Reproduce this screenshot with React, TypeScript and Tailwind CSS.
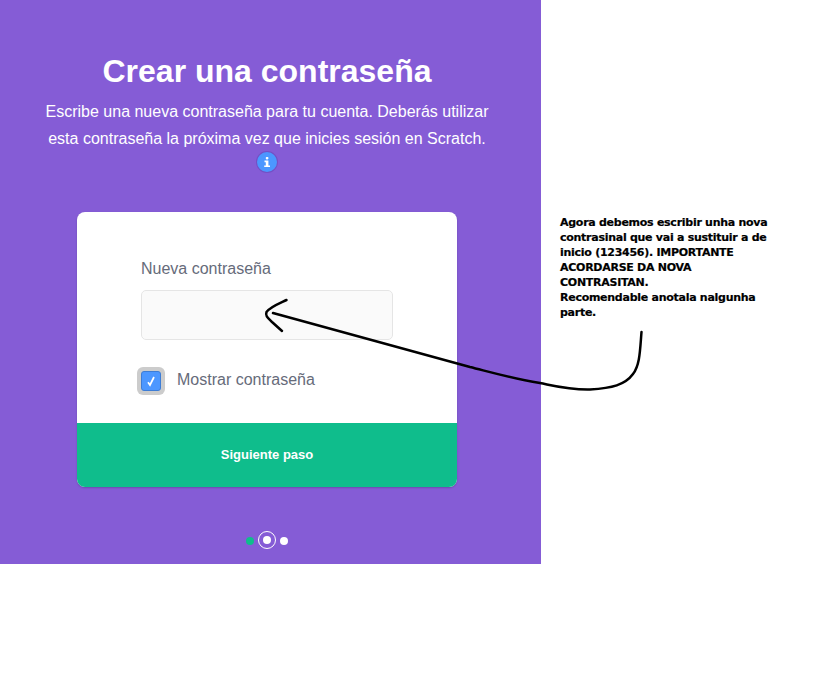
export default function App() {
  return (
    <div className="relative w-[814px] h-[685px] bg-white overflow-hidden font-['Liberation_Sans',Arial,sans-serif]">
      <div className="w-[541px] h-[564px] bg-[#855cd6] pr-[7px] flex flex-col items-center text-white">
        <h1 className="mt-[51px] text-[32px] leading-[40px] font-bold">Crear una contraseña</h1>
        <p className="mt-[7px] w-[460px] text-center text-[16px] leading-[27.2px]">
          Escribe una nueva contraseña para tu cuenta. Deberás utilizar esta contraseña la próxima vez que inicies sesión en Scratch.
        </p>
        <div className="w-[20px] h-[20px] rounded-full bg-[#4c97ff] ring-1 ring-[#7350c4] flex items-center justify-center">
          <svg width="8" height="10" viewBox="0 0 8 10" fill="white">
            <rect x="2.8" y="0" width="2.6" height="2.4" rx="0.8" />
            <path d="M1.5 3.6h3.9v4.8H7V10H1.2V8.4h1.6V5.2H1.5z" />
          </svg>
        </div>
        <div className="mt-[40px] w-[380px] h-[275px] bg-white rounded-lg shadow-[0_1px_2px_rgba(0,0,0,0.2)] flex flex-col overflow-hidden">
          <div className="flex-1 pl-[64px] pt-[47px]">
            <label className="block text-[16px] leading-[20px] text-[#666b7a]">Nueva contraseña</label>
            <input
              type="password"
              className="block mt-[11px] w-[252px] h-[50px] rounded-[5px] border border-[#e5e5e5] bg-[#fafafa] outline-none"
            />
            <div className="mt-[27px] flex items-center -ml-[4px]">
              <div className="w-[28px] h-[28px] rounded-[6px] bg-[#cccccc] flex items-center justify-center">
                <div className="w-[20px] h-[20px] rounded-[3px] bg-[#4c97ff] border border-[#3d7dd6] flex items-center justify-center">
                  <svg width="12" height="12" viewBox="0 0 12 12" fill="none" stroke="white" strokeWidth="1.7">
                    <path d="M3 7.2 L5 10 L9 2" />
                  </svg>
                </div>
              </div>
              <span className="ml-[12px] -mt-[2px] text-[16px] leading-[20px] text-[#666b7a]">Mostrar contraseña</span>
            </div>
          </div>
          <div className="h-[64px] pb-[2px] bg-[#0fbd8c] flex items-center justify-center text-[13px] font-bold text-white">
            Siguiente paso
          </div>
        </div>
        <div className="mt-[45px] flex items-center gap-[4px]">
          <span className="w-[8px] h-[8px] rounded-full bg-[#0fbd8c]" />
          <span className="w-[18px] h-[18px] rounded-full border border-white flex items-center justify-center -mt-[1px]">
            <span className="w-[8px] h-[8px] rounded-full bg-white" />
          </span>
          <span className="w-[8px] h-[8px] rounded-full bg-white" />
        </div>
      </div>

      <div className="absolute left-[560px] top-[215px] w-[225px] text-[11px] tracking-[-0.27px] leading-[15px] font-bold text-black [-webkit-text-stroke:0.2px_black] font-['DejaVu_Sans',sans-serif]">
        Agora debemos escribir unha nova<br />
        contrasinal que vai a sustituir a de<br />
        inicio (123456). IMPORTANTE<br />
        ACORDARSE DA NOVA<br />
        CONTRASITAN.<br />
        Recomendable anotala nalgunha<br />
        parte.
      </div>

      <svg className="absolute left-0 top-0 pointer-events-none" width="814" height="685" fill="none" stroke="black" strokeLinecap="round" strokeLinejoin="round">
        <path strokeWidth="2.5" d="M641.5 332 C640 350 640 365 633 374 C625 385 612 388 590 389.5 C570 390 555 386 540 383 C510 378 490 372 470 367 L273 313" />
        <path strokeWidth="2.5" d="M286.5 300 C278 304 270 307 266.5 312 C265 316 268 318 272 322 L282 331" />
      </svg>
    </div>
  );
}
